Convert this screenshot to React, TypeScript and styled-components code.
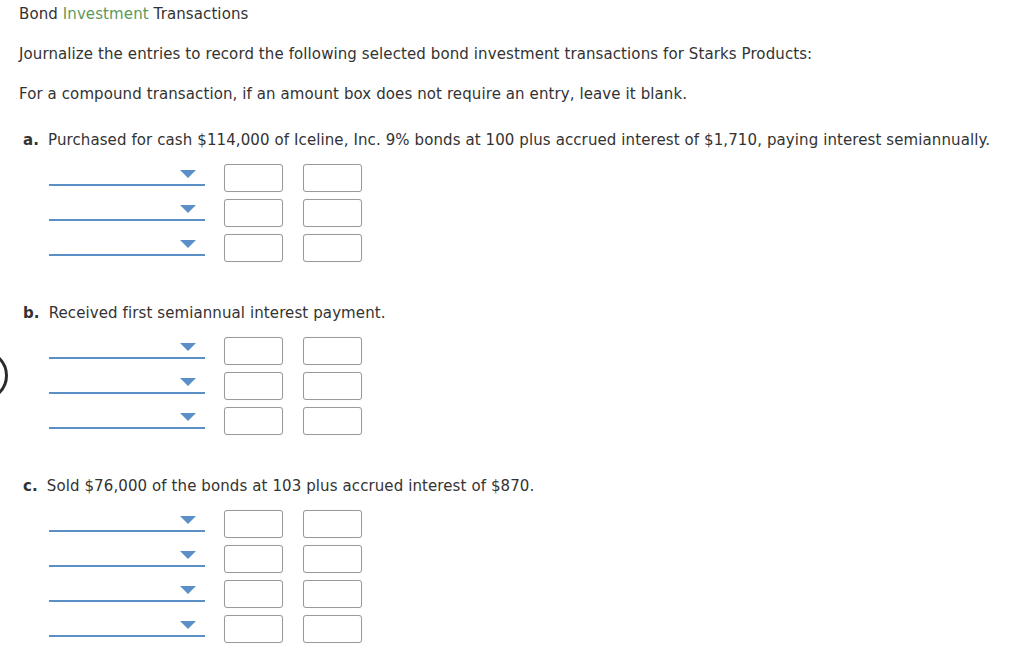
import React from "react";
import styled, { createGlobalStyle } from "styled-components";

const Global = createGlobalStyle`
  html, body { margin: 0; padding: 0; background: #fff; }
  body { font-family: "DejaVu Sans", Verdana, sans-serif; font-size: 15px; letter-spacing: 0.1px; color: #333; }
  * { box-sizing: border-box; }
`;

const Page = styled.div`
  position: relative;
  padding: 4px 0 0 19px;
  width: 1024px;
  height: 659px;
  overflow: hidden;
`;

const Title = styled.div`
  line-height: 20px;
  margin: 0 0 20px;
`;

const Green = styled.span`
  color: #5c9a5c;
`;

const Para = styled.p`
  margin: 0 0 20px;
  line-height: 20px;
`;

const Section = styled.section<{ $first?: boolean }>`
  margin-top: ${(p) => (p.$first ? "26px" : "41px")};
`;

const Prompt = styled.div`
  line-height: 20px;
  padding-left: 4px;
  margin-bottom: 14px;
`;

const Letter = styled.b`
  font-weight: bold;
  margin-right: 9px;
`;

const Rows = styled.div`
  display: flex;
  flex-direction: column;
  gap: 7px;
`;

const Row = styled.div`
  display: flex;
  align-items: flex-start;
  height: 28px;
  padding-left: 30px;
`;

const Select = styled.div`
  width: 156px;
  height: 22px;
  border-bottom: 2px solid #5b8fc7;
  display: flex;
  justify-content: flex-end;
  padding: 6px 9px 0 0;
  margin-right: 19px;
`;

const Arrow = styled.span`
  width: 0;
  height: 0;
  border-left: 8px solid transparent;
  border-right: 8px solid transparent;
  border-top: 8px solid #5b8fc7;
`;

const Amount = styled.div`
  width: 59px;
  height: 28px;
  border: 1px solid #9a9a9a;
  border-radius: 3px;
  background: #fff;
  box-shadow: 0 0 1px rgba(0,0,0,0.15);
  & + & {
    margin-left: 20px;
  }
`;

const Arc = styled.div`
  position: absolute;
  left: -43px;
  top: 350px;
  width: 51px;
  height: 51px;
  border: 3px solid #2b2b2b;
  border-radius: 50%;
`;

const sections = [
  {
    letter: "a.",
    text:
      "Purchased for cash $114,000 of Iceline, Inc. 9% bonds at 100 plus accrued interest of $1,710, paying interest semiannually.",
    rows: 3,
  },
  { letter: "b.", text: "Received first semiannual interest payment.", rows: 3 },
  {
    letter: "c.",
    text: "Sold $76,000 of the bonds at 103 plus accrued interest of $870.",
    rows: 4,
  },
];

export default function App() {
  return (
    <>
      <Global />
      <Page>
        <Title>
          Bond <Green>Investment</Green> Transactions
        </Title>
        <Para>
          Journalize the entries to record the following selected bond investment transactions for Starks Products:
        </Para>
        <Para>For a compound transaction, if an amount box does not require an entry, leave it blank.</Para>
        {sections.map((s, i) => (
          <Section key={s.letter} $first={i === 0}>
            <Prompt>
              <Letter>{s.letter}</Letter>
              {s.text}
            </Prompt>
            <Rows>
              {Array.from({ length: s.rows }).map((_, r) => (
                <Row key={r}>
                  <Select>
                    <Arrow />
                  </Select>
                  <Amount />
                  <Amount />
                </Row>
              ))}
            </Rows>
          </Section>
        ))}
        <Arc />
      </Page>
    </>
  );
}
